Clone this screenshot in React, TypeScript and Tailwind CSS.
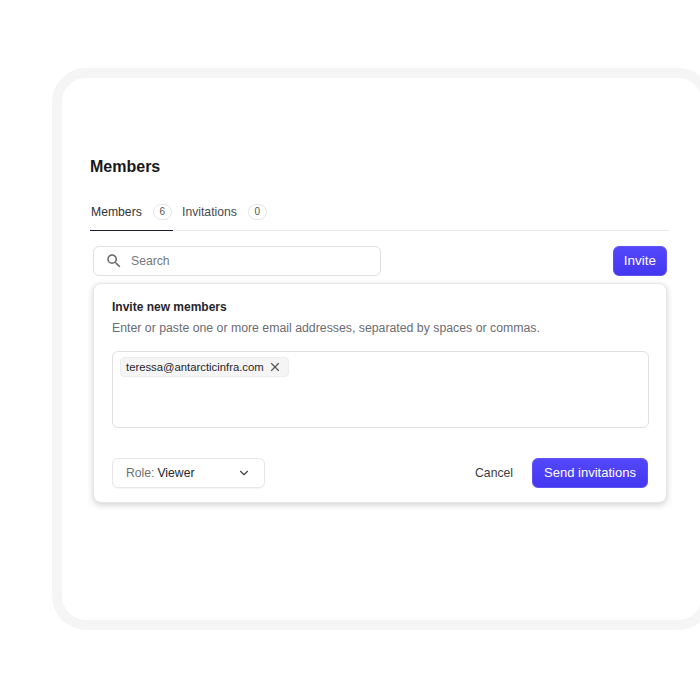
import { ChevronDown, X } from 'lucide-react';
import { MdSearch } from 'react-icons/md';

export default function App() {
  return (
    <div className="h-[700px] w-[700px] overflow-hidden bg-white pl-[52px] pt-[68px] font-['Liberation_Sans',Arial,sans-serif]">
      {/* Frame */}
      <div className="h-[562px] w-[660px] rounded-[34px] border-[10px] border-[#f5f5f5] bg-white pl-[28px] pt-[78px]">
        <h1 className="text-[16px] font-bold leading-[22px] text-[#18181b]">Members</h1>

        {/* Tabs */}
        <div className="mt-[23px] flex h-[30px] w-[580px] items-start border-b border-[#ebebeb] text-[12.2px] leading-[18px]">
          <div className="flex h-[30px] w-[83px] items-start border-b border-[#1c1a2e] pl-px pt-[2px] text-[#33333b]">
            <span>Members</span>
            <span className="ml-[11px] mt-px flex h-[16px] w-[19px] items-center justify-center rounded-full border border-[#e5e5e5] text-[10px] text-[#555]">6</span>
          </div>
          <div className="ml-[9px] flex items-start pt-[2px] text-[#4b4b52]">
            <span>Invitations</span>
            <span className="ml-[11px] mt-px flex h-[16px] w-[19px] items-center justify-center rounded-full border border-[#e5e5e5] text-[10px] text-[#555]">0</span>
          </div>
        </div>

        <div className="ml-[3px] w-[574px]">
          {/* Search row */}
          <div className="mt-[15px] flex items-center justify-between">
            <div className="flex h-[30px] w-[288px] items-center rounded-[6px] border border-[#e0e0e0] pl-[11px]">
              <MdSearch size={18} className="text-[#666]" />
              <span className="ml-[8px] text-[12.2px] text-[#77777c]">Search</span>
            </div>
            <button className="h-[30px] w-[54px] rounded-[6px] border border-[#5f52f5] bg-gradient-to-b from-[#5447fb] to-[#4437f0] text-[13.5px] text-white">Invite</button>
          </div>

          {/* Invite panel */}
          <div className="mt-[7px] h-[220px] rounded-[8px] border border-[#e6e6e6] bg-white px-[18px] pt-[15px] shadow-[0_2px_6px_rgba(0,0,0,0.18)]">
            <h2 className="text-[12px] font-bold leading-[17px] text-[#26262b]">Invite new members</h2>
            <p className="mt-[4px] whitespace-nowrap text-[12.3px] leading-[17px] text-[#6d6d72]">Enter or paste one or more email addresses, separated by spaces or commas.</p>

            <div className="mt-[14px] h-[77px] w-[537px] rounded-[6px] border border-[#e0e0e0] pl-[7px] pt-[5px]">
              <div className="flex h-[20px] w-[169px] items-center rounded-[4px] border border-[#ededed] bg-[#f5f5f5] pl-[5px] text-[11.3px] text-[#26262b]">
                <span>teressa@antarcticinfra.com</span>
                <X size={14} strokeWidth={2} className="ml-[4px] text-[#555]" />
              </div>
            </div>

            <div className="mt-[30px] flex items-center">
              <div className="flex h-[30px] w-[153px] items-center rounded-[6px] border border-[#e6e6e6] pl-[13px] text-[12.2px] shadow-[0_1px_1px_rgba(0,0,0,0.04)]">
                <span className="text-[#707075]">Role:</span>
                <span className="ml-[3px] text-[#26262b]">Viewer</span>
                <ChevronDown size={14} strokeWidth={2} className="ml-[42px] text-[#444]" />
              </div>
              <span className="ml-auto text-[12.2px] text-[#3b3b40]">Cancel</span>
              <button className="ml-[19px] h-[30px] w-[116px] rounded-[6px] border border-[#5f52f5] bg-gradient-to-b from-[#5447fb] to-[#4437f0] text-[13px] text-white">Send invitations</button>
            </div>
          </div>
        </div>
      </div>
    </div>
  );
}
